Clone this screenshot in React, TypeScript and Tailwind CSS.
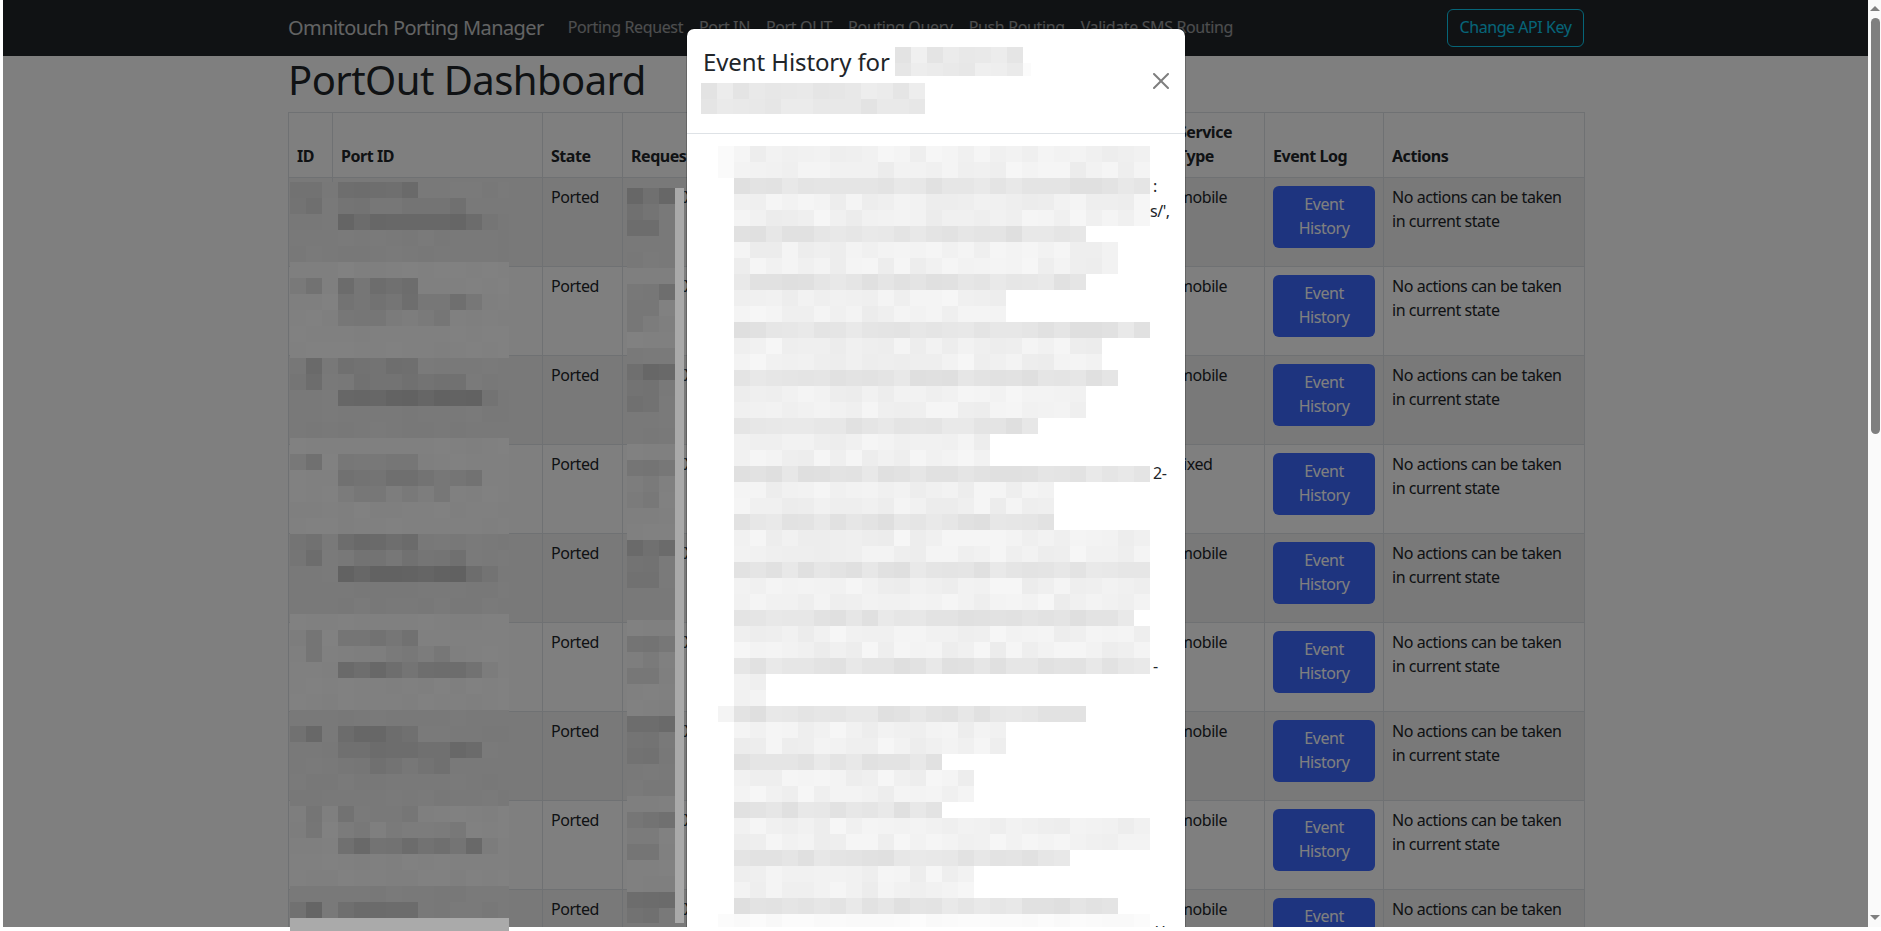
const FONT = "font-['Noto_Sans',sans-serif] tracking-[-0.45px]";

const navLinks = ["Porting Request", "Port IN", "Port OUT", "Routing Query", "Push Routing", "Validate SMS Routing"];
const rows = ["mobile", "mobile", "mobile", "fixed", "mobile", "mobile", "mobile", "mobile", "mobile"];

function noise(i: number, j: number, range: number) {
  const s = Math.sin(i * 12.9898 + j * 78.233) * 43758.5453;
  return Math.round((s - Math.floor(s)) * range * 2 - range);
}

function grey(v: number) {
  const c = Math.max(0, Math.min(255, v));
  return `rgb(${c},${c},${c})`;
}

// pixelated block, cell returns a grey level or null for a see-through cell
function Mosaic({
  cols,
  lines,
  width,
  height,
  cell,
  className
}: {
  cols: number;
  lines: number;
  width: number;
  height: number;
  cell: (i: number, j: number) => number | null;
  className?: string;
}) {
  const rects = [];
  for (let j = 0; j < lines; j++) {
    for (let i = 0; i < cols; i++) {
      const v = cell(i, j);
      if (v === null) continue;
      rects.push(<rect key={`${i}-${j}`} x={i * 16} y={j * 16} width={16} height={16} fill={grey(v)} />);
    }
  }
  return (
    <svg width={width} height={height} viewBox={`0 0 ${width} ${height}`} shapeRendering="crispEdges" className={className}>
      {rects}
    </svg>
  );
}

// [start line, kind] of the redacted text in the id and port id cells
const portLines: [number, "a" | "b"][] = [
  [0, "a"],
  [6, "b"],
  [11, "a"],
  [17, "b"],
  [22, "a"],
  [28, "a"],
  [34, "b"],
  [39, "a"],
  [45, "b"]
];

function rowBase(y: number) {
  return Math.floor((y + 8 - 177) / 89) % 2 === 0 ? 121 : 128;
}

function portCell(i: number, j: number) {
  if (j === 46) return 170;
  const base = rowBase(182 + j * 16) + noise(i, j, 1);
  const hit = portLines.find(([s]) => j >= s && j < s + 3);
  if (!hit) return base;
  const [start, kind] = hit;
  const line = j - start;
  if (kind === "a") {
    if (line < 2 && i === 0) return base - 4 + noise(i, j, 2);
    if (line < 2 && i === 1) return base - 11 + noise(i, j, 3);
    if (line === 0 && i >= 3 && i <= 7) return base - 11 + noise(i, j, 4);
    if (line === 1 && i >= 3 && i <= 10) return base - 5 + noise(i, j, 3);
    if (line === 2 && i >= 3 && i <= 11) return base - 18 + noise(i, j, 5);
    if (line === 2 && i === 12) return base - 5;
  } else {
    if (line === 0 && i === 0) return base - 8;
    if (line === 0 && i === 1) return base - 17 + noise(i, j, 3);
    if (line === 0 && i >= 3 && i <= 7) return base - 14 + noise(i, j, 5);
    if (line === 1 && i >= 3 && i <= 11) return base - 13 + noise(i, j, 4);
    if (line === 2 && i >= 3 && i <= 9) return base - 6 + noise(i, j, 3);
  }
  return base;
}

const requestStarts = [0, 6, 11, 17, 22, 28, 33, 39, 44];

function requestCell(i: number, j: number) {
  const base = rowBase(188 + j * 16) + noise(i, j, 1);
  const start = requestStarts.find((s) => j >= s && j < s + 3);
  if (start === undefined) return base;
  const line = j - start;
  if (line === 0) return base - 13 + noise(i, j, 4);
  if (i < 2) return base - (line === 1 ? 6 : 8) + noise(i, j, 3);
  return base;
}

// [end x of the two light lines, end x of the dark line], one group per three lines
const bodyGroups = [
  [1150, 1150],
  [1150, 1086],
  [1118, 1086],
  [1006, 1150],
  [1102, 1118],
  [1086, 1038],
  [990, 1150],
  [1054, 1054],
  [1150, 1150],
  [1150, 1134],
  [1150, 1150],
  [766, 1086],
  [1006, 942],
  [974, 942],
  [1150, 1070],
  [960, 1118],
  [1150, 0]
];

function bodyCell(i: number, j: number) {
  const group = bodyGroups[Math.floor(j / 3)];
  if (!group) return null;
  const dark = j % 3 === 2;
  const end = dark ? group[1] : group[0];
  const x = 718 + i * 16;
  if (x >= end) return null;
  if (j === 48) return 250 + noise(i, j, 2);
  if (i === 0) {
    if (j < 2) return 250;
    if (j === 35) return 244;
    return null;
  }
  return (dark ? 228 : 241) + noise(i, j, 5);
}

function NavBar() {
  return (
    <nav className="flex h-14 items-center bg-[#212529]">
      <div className="ml-[285px] flex w-[1296px] items-center">
        <span className="mr-6 text-xl tracking-[-0.58px] text-white/75">Omnitouch Porting Manager</span>
        <div className="mb-[2px] flex flex-1 gap-4 tracking-[-0.37px] text-white/55">
          {navLinks.map((link) => (
            <span key={link}>{link}</span>
          ))}
        </div>
        <button className="h-[38px] w-[137px] rounded-md border border-[#0dcaf0] pb-[2px] text-[#0dcaf0]">Change API Key</button>
      </div>
    </nav>
  );
}

function Table() {
  return (
    <table className="w-[1296px] table-fixed border-collapse border border-[#dee2e6] text-[#212529]">
      <colgroup>
        <col className="w-[44px]" />
        <col className="w-[210px]" />
        <col className="w-[80px]" />
        <col className="w-[547px]" />
        <col className="w-[95px]" />
        <col className="w-[119px]" />
        <col className="w-[201px]" />
      </colgroup>
      <thead>
        <tr className="h-16 align-bottom font-bold">
          {["ID", "Port ID", "State", "Requested", "Service Type", "Event Log", "Actions"].map((h) => (
            <th key={h} className="border border-[#dee2e6] px-2 pt-[7px] pb-[9px] text-left font-bold">
              {h}
            </th>
          ))}
        </tr>
      </thead>
      <tbody>
        {rows.map((type, index) => (
          <tr key={index} className={`h-[89px] align-top ${index % 2 === 0 ? "bg-black/5" : ""}`}>
            <td className="border border-[#dee2e6] p-2" />
            <td className="border border-[#dee2e6] p-2" />
            <td className="border border-[#dee2e6] px-2 pt-[7px]">Ported</td>
            <td className="overflow-hidden border border-[#dee2e6] px-2 pt-[7px] whitespace-nowrap">XXXXXXXXX</td>
            <td className="border border-[#dee2e6] px-2 pt-[7px]">{type}</td>
            <td className="border border-[#dee2e6] p-2">
              <button className="h-[62px] w-[102px] rounded-md bg-[#3c68ff] pb-[2px] leading-6 text-white">
                Event
                <br />
                History
              </button>
            </td>
            <td className="border border-[#dee2e6] px-2 pt-[7px]">No actions can be taken in current state</td>
          </tr>
        ))}
      </tbody>
    </table>
  );
}

function Modal() {
  return (
    <div className="absolute top-7 left-[683px] h-[899px] w-[500px] overflow-hidden rounded-t-lg border border-b-0 border-black/20 bg-white bg-clip-padding text-[#212529]">
      <div className="flex items-center border-b border-[#dee2e6] p-4">
        <div className="flex-1 text-2xl leading-9 tracking-[-0.1px]">
          <div className="flex h-9 items-start">
            <span className="-mt-px">Event History for</span>
            <Mosaic
              cols={9}
              lines={2}
              width={136}
              height={29}
              className="mt-[2px] ml-[5px]"
              cell={(i, j) => (i === 8 ? (j === 1 ? 251 : 255) : 234 + noise(i, j, 7))}
            />
          </div>
          <div className="h-9 pt-[2px]">
            <Mosaic
              cols={14}
              lines={2}
              width={224}
              height={31}
              className="-ml-[2px]"
              cell={(i, j) => 232 + noise(i, j, 5)}
            />
          </div>
        </div>
        <svg width="16" height="16" viewBox="0 0 16 16" className="opacity-50">
          <path d="M.293.293a1 1 0 0 1 1.414 0L8 6.586 14.293.293a1 1 0 1 1 1.414 1.414L9.414 8l6.293 6.293a1 1 0 0 1-1.414 1.414L8 9.414l-6.293 6.293a1 1 0 0 1-1.414-1.414L6.586 8 .293 1.707a1 1 0 0 1 0-1.414" />
        </svg>
      </div>
      <div className="relative px-4 pt-3">
        <span className="absolute top-10 left-[466px]">:</span>
        <span className="absolute top-[65px] left-[463px]">s/&apos;,</span>
        <span className="absolute top-[327px] left-[466px]">2-</span>
        <span className="absolute top-[520px] left-[466px]">-</span>
        <span className="absolute top-[786px] left-[468px]">&apos; &apos;</span>
        <Mosaic cols={27} lines={49} width={432} height={784} className="relative ml-[15px]" cell={bodyCell} />
      </div>
    </div>
  );
}

function Scrollbar() {
  return (
    <div className="flex h-[927px] w-[13px] flex-col items-center bg-[#fafafa] pl-[1px]">
      <div className="mt-[6px] h-0 w-0 border-x-[5px] border-b-[5px] border-x-transparent border-b-[#7f7f7f]" />
      <div className="mt-[7px] h-[416px] w-[9px] rounded-[5px] bg-[#7f7f7f]" />
      <div className="mt-auto mb-[7px] h-0 w-0 border-x-[5px] border-t-[5px] border-x-transparent border-t-[#7f7f7f]" />
    </div>
  );
}

export default function App() {
  return (
    <div className={`relative h-[931px] w-full overflow-hidden bg-white ${FONT}`}>
      <div className="flex">
        <div className="w-[3px]" />
        <main className="relative h-[927px] w-[1865px] overflow-hidden">
          <NavBar />
          <div className="ml-[285px]">
            <h1 className="mb-2 text-[40px] leading-[48px] tracking-[-0.56px] text-[#212529]">PortOut Dashboard</h1>
            <Table />
          </div>
          <div className="absolute inset-0 bg-black/50" />
          <Modal />
        </main>
        <Scrollbar />
      </div>
      <Mosaic cols={14} lines={47} width={219} height={749} className="absolute top-[182px] left-[290px]" cell={portCell} />
      <Mosaic cols={3} lines={46} width={48} height={735} className="absolute top-[188px] left-[627px]" cell={requestCell} />
      <div className="absolute top-[188px] left-[675px] h-[735px] w-[9px] bg-[#a9a9a9]" />
    </div>
  );
}
